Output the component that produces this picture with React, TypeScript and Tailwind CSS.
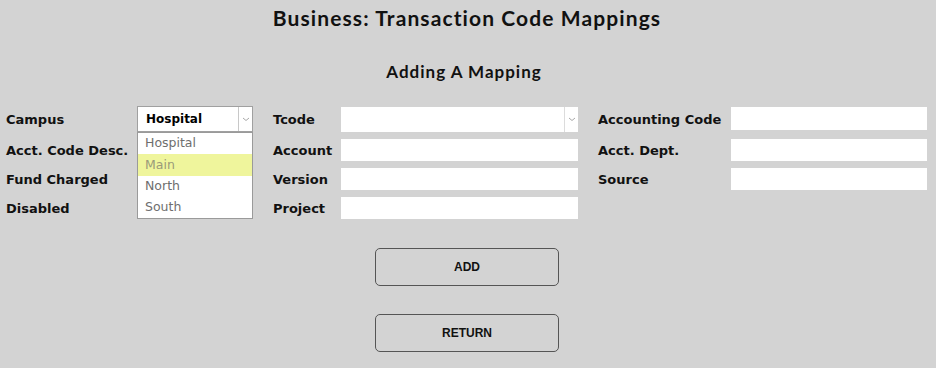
import React from "react";

const Chevron = () => (
  <svg width="8" height="5" viewBox="0 0 8 5" className="block">
    <path d="M1 1 L4 3.5 L7 1" fill="none" stroke="#a8a8a8" strokeWidth="1" />
  </svg>
);

const Label = ({ children }: { children: React.ReactNode }) => (
  <div className="flex items-center pt-px text-[13px] font-bold text-[#111] whitespace-nowrap [font-family:'DejaVu_Sans',sans-serif]">
    {children}
  </div>
);

const Input = ({ className = "" }: { className?: string }) => (
  <div className={`bg-white ${className}`} />
);

export default function App() {
  return (
    <div className="w-[936px] h-[368px] bg-[#d3d3d3] overflow-hidden [font-family:'DejaVu_Sans',sans-serif]">
      <div className="pt-[5px] pr-[2px] h-[30px] text-center text-[21px] leading-[26px] font-bold tracking-[1.1px] text-[#111] [font-family:'Lato',sans-serif]">
        Business: Transaction Code Mappings
      </div>
      <div className="mt-[31px] pr-[8px] h-[21px] text-center text-[17px] leading-[21px] font-bold tracking-[1px] text-[#111] [font-family:'Lato',sans-serif]">
        Adding A Mapping
      </div>
      <div className="mt-[25px] pl-[6px] grid grid-cols-[131px_116px_20px_68px_237px_20px_133px_196px] grid-rows-[25px_22px_22px_22px] gap-y-[7px]">
        {/* row 1 */}
        <Label>Campus</Label>
        <div className="relative">
          <div className="mt-[-1px] h-[26px] bg-white border border-[#a0a0a0] flex">
            <div className="flex-1 flex items-center pl-[8px] text-[12px] font-bold text-black">Hospital</div>
            <div className="w-[14px] border-l border-[#c8c8c8] flex items-center justify-center">
              <Chevron />
            </div>
          </div>
          <div className="absolute left-0 top-[25px] w-[116px] z-10 bg-white border border-[#9a9a9a] text-[12.5px] text-[#6e6e6e] [font-family:'DejaVu_Sans',sans-serif]">
            <div className="h-[21px] flex items-center pl-[7px]">Hospital</div>
            <div className="h-[22px] flex items-center pl-[7px] bg-[#eff59c] text-[#9a9a7a]">Main</div>
            <div className="h-[21px] flex items-center pl-[7px]">North</div>
            <div className="h-[21px] flex items-center pl-[7px]">South</div>
          </div>
        </div>
        <div />
        <Label>Tcode</Label>
        <div className="h-[25px] bg-white flex">
          <div className="flex-1" />
          <div className="w-[14px] border-l border-[#dcdcdc] flex items-center justify-center">
            <Chevron />
          </div>
        </div>
        <div />
        <Label>Accounting Code</Label>
        <Input className="h-[23px]" />

        {/* row 2 */}
        <Label>Acct. Code Desc.</Label>
        <div />
        <div />
        <Label>Account</Label>
        <Input />
        <div />
        <Label>Acct. Dept.</Label>
        <Input />

        {/* row 3 */}
        <Label>Fund Charged</Label>
        <div />
        <div />
        <Label>Version</Label>
        <Input />
        <div />
        <Label>Source</Label>
        <Input />

        {/* row 4 */}
        <Label>Disabled</Label>
        <div />
        <div />
        <Label>Project</Label>
        <Input />
        <div />
        <div />
        <div />
      </div>
      <div className="mt-[29px] flex flex-col items-center gap-[28px] pr-[2px]">
        <button className="w-[184px] h-[38px] rounded-[5px] border-[1.5px] border-[#555] bg-transparent text-[12px] font-bold text-[#111] [font-family:'Liberation_Sans',sans-serif]">
          ADD
        </button>
        <button className="w-[184px] h-[38px] rounded-[5px] border-[1.5px] border-[#555] bg-transparent text-[12px] font-bold text-[#111] [font-family:'Liberation_Sans',sans-serif]">
          RETURN
        </button>
      </div>
    </div>
  );
}
